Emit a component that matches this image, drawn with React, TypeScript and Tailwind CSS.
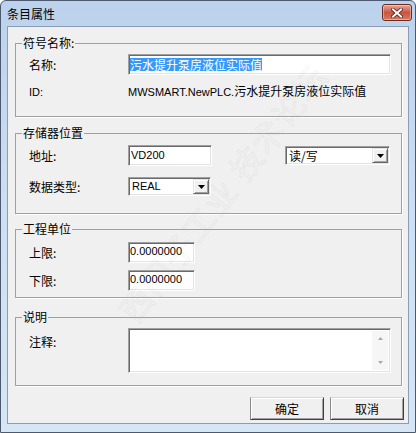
import React from "react";

const sunken =
  "border border-t-[#a0a0a0] border-l-[#a0a0a0] border-r-white border-b-white shadow-[inset_1px_1px_0_#696969,inset_-1px_-1px_0_#e3e3e3] bg-white";
const raised =
  "border border-t-[#e3e3e3] border-l-[#e3e3e3] border-r-[#696969] border-b-[#696969] shadow-[inset_1px_1px_0_#fff,inset_-1px_-1px_0_#a0a0a0] bg-[#f0f0f0]";
const latin = "font-['Liberation_Sans','Noto_Sans_CJK_SC',sans-serif] text-[11px]";

function Combo({ cls, text, textCls }: { cls: string; text: string; textCls: string }) {
  return (
    <div className={`${sunken} ${cls} h-[19px] flex items-stretch p-[1px]`}>
      <span className={`flex-1 pl-[2px] flex items-center ${textCls}`}>{text}</span>
      <div className={`${raised} w-[16px] flex items-center justify-center`}>
        <svg width="7" height="4" viewBox="0 0 7 4">
          <path d="M0 0H7L3.5 4Z" fill="#000" />
        </svg>
      </div>
    </div>
  );
}

function Group({
  title,
  cls,
  children,
}: {
  title: string;
  cls: string;
  children: React.ReactNode;
}) {
  return (
    <fieldset className={`border border-[#a0a0a0] shadow-[1px_1px_0_#fff] ${cls}`}>
      <legend className="ml-[6px] px-[1px] leading-[14px] text-[12px]">{title}</legend>
      {children}
    </fieldset>
  );
}

export default function App() {
  return (
    <div className="relative w-[416px] h-[433px] overflow-hidden font-['Noto_Sans_CJK_SC',sans-serif] text-[12px] text-black">
      <div className="flex flex-col w-full h-full rounded-t-[6px] border border-[#4b5a6e] bg-gradient-to-b from-[#bcd2ec] via-[#cddff3] to-[#d6e6f5] px-[6px] pb-[8px]">
        {/* title bar */}
        <div className="h-[25px] flex justify-between">
          <span className="pt-[5px] leading-[16px] text-[12px]">条目属性</span>
          <div className="mt-[3px] mr-[-3px] w-[30px] h-[17px] rounded-[3px] border border-[#6e2b25] bg-gradient-to-b from-[#e6a89c] via-[#c9553f] to-[#d47a62] shadow-[inset_0_0_0_1px_rgba(255,255,255,0.35)] flex items-center justify-center">
            <svg width="12" height="10" viewBox="0 0 12 10">
              <path d="M2 1.5L10 8.5M10 1.5L2 8.5" stroke="#5a1f1a" strokeWidth="3.6" strokeLinecap="square" />
              <path d="M2 1.5L10 8.5M10 1.5L2 8.5" stroke="#fff" strokeWidth="2" strokeLinecap="square" />
            </svg>
          </div>
        </div>

        {/* client */}
        <div className="flex-1 bg-[#f0f0f0] border border-[#8a9db5] flex flex-col pl-[7px] pr-[6px]">
          {/* group 1 */}
          <Group title="符号名称:" cls="mt-[9px]">
            <div className="pl-[13px] pt-[4px] pb-[14px]">
              <div className="flex items-center h-[21px]">
                <span className="w-[99px]">名称:</span>
                <div className={`${sunken} w-[263px] h-[21px] pl-[1px] pt-[1px]`}>
                  <span className="inline-block bg-[#3399ff] text-white leading-[13px] text-[12px]">
                    污水提升泵房液位实际值
                  </span>
                </div>
              </div>
              <div className="flex items-center h-[21px] mt-[6px]">
                <span className={`w-[99px] ${latin} pt-[2px]`}>ID:</span>
                <span className="leading-[14px]">
                  <span className={latin}>MWSMART.NewPLC.</span>
                  <span className="text-[12px]">污水提升泵房液位实际值</span>
                </span>
              </div>
            </div>
          </Group>

          {/* group 2 */}
          <Group title="存储器位置" cls="mt-[9px]">
            <div className="pl-[13px] pt-[5px] pb-[17px]">
              <div className="flex items-center h-[21px]">
                <span className="w-[99px]">地址:</span>
                <div className={`${sunken} w-[84px] h-[21px] pl-[2px] flex items-center ${latin}`}>VD200</div>
                <Combo cls="ml-[73px] w-[105px]" text="读/写" textCls="text-[12px]" />
              </div>
              <div className="flex items-center h-[19px] mt-[11px]">
                <span className="w-[99px]">数据类型:</span>
                <Combo cls="w-[83px]" text="REAL" textCls={latin} />
              </div>
            </div>
          </Group>

          {/* group 3 */}
          <Group title="工程单位" cls="mt-[8px]">
            <div className="pl-[13px] pt-[6px] pb-[6px]">
              <div className="flex items-center h-[21px]">
                <span className="w-[99px]">上限:</span>
                <div className={`${sunken} w-[67px] h-[21px] pl-[1px] pb-[2px] flex items-center ${latin}`}>0.0000000</div>
              </div>
              <div className="flex items-center h-[21px] mt-[7px]">
                <span className="w-[99px]">下限:</span>
                <div className={`${sunken} w-[67px] h-[21px] pl-[1px] pb-[2px] flex items-center ${latin}`}>0.0000000</div>
              </div>
            </div>
          </Group>

          {/* group 4 */}
          <Group title="说明" cls="mt-[12px]">
            <div className="pl-[13px] pt-[4px] pb-[12px]">
              <div className="flex items-start">
                <span className="w-[99px] pt-[7px] leading-[14px]">注释:</span>
                <div className={`${sunken} w-[263px] h-[45px] flex justify-end p-[2px]`}>
                  <div className="w-[16px] h-full bg-[#f6f6f6] flex flex-col justify-between items-center py-[6px]">
                    <svg width="5" height="3" viewBox="0 0 5 3">
                      <path d="M0 3H5L2.5 0Z" fill="#a8a8a8" />
                    </svg>
                    <svg width="5" height="3" viewBox="0 0 5 3">
                      <path d="M0 0H5L2.5 3Z" fill="#a8a8a8" />
                    </svg>
                  </div>
                </div>
              </div>
            </div>
          </Group>

          {/* buttons */}
          <div className="mt-[11px] mr-[-2px] flex justify-end gap-[6px]">
            <button className="w-[74px] h-[23px] bg-[#f0f0f0] border border-t-[#d8d8d8] border-l-[#8a8a8a] border-r-[#404040] border-b-[#404040] shadow-[inset_1px_1px_0_#fff,inset_-1px_-1px_0_#a0a0a0] text-[12px] leading-[14px]">
              确定
            </button>
            <button className="w-[74px] h-[23px] bg-[#f0f0f0] border border-t-[#d8d8d8] border-l-[#8a8a8a] border-r-[#404040] border-b-[#404040] shadow-[inset_1px_1px_0_#fff,inset_-1px_-1px_0_#a0a0a0] text-[12px] leading-[14px]">
              取消
            </button>
          </div>
        </div>
      </div>

      {/* watermark (faint, decorative) */}
      <div
        aria-hidden="true"
        className="pointer-events-none absolute left-[222px] top-[192px] -translate-x-1/2 -translate-y-1/2 rotate-[-52deg] whitespace-nowrap"
      >
        <span className="text-[32px] leading-[36px] text-transparent [-webkit-text-stroke:1px_rgba(160,160,160,0.13)] tracking-[2px]">
          西门子工业 技术论坛
        </span>
      </div>
    </div>
  );
}
